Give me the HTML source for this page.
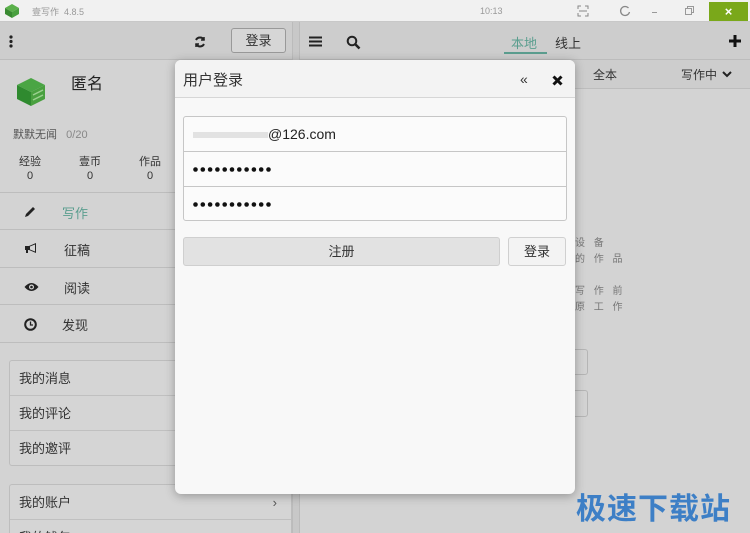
<!DOCTYPE html>
<html><head><meta charset="utf-8"><style>
*{margin:0;padding:0;box-sizing:border-box}
html,body{width:750px;height:533px;overflow:hidden}
body{background:#d3d3d3;font-family:"Liberation Sans","Noto Sans CJK SC",sans-serif;position:relative;color:#333;font-size:13px}
.a{position:absolute;white-space:nowrap}
.row{position:absolute;left:0;width:292px;border-bottom:1px solid #bdbdbd;height:38px}
.card{position:absolute;left:9px;width:283px;border:1px solid #bdbdbd;border-radius:3px;background:#d5d5d5}
.card div{height:35px;line-height:35px;padding-left:9px;border-bottom:1px solid #c0c0c0;font-size:13px}
.card div:last-child{border-bottom:none}
.pw{height:35px;padding-left:9px;padding-top:15px}
.pw svg{display:block}
</style></head><body>
<svg width="0" height="0" style="position:absolute"><defs><g id="dots"><circle cx="2.5" cy="2.5" r="2.3"/><circle cx="9.8" cy="2.5" r="2.3"/><circle cx="17.1" cy="2.5" r="2.3"/><circle cx="24.4" cy="2.5" r="2.3"/><circle cx="31.7" cy="2.5" r="2.3"/><circle cx="39" cy="2.5" r="2.3"/><circle cx="46.3" cy="2.5" r="2.3"/><circle cx="53.6" cy="2.5" r="2.3"/><circle cx="60.9" cy="2.5" r="2.3"/><circle cx="68.2" cy="2.5" r="2.3"/><circle cx="75.5" cy="2.5" r="2.3"/></g></defs></svg>
<div class="a" style="left:0;top:0;width:750px;height:22px;background:#f1f1f1;border-bottom:1px solid #c8c8c8"></div>
<svg class="a" style="left:4px;top:3px" width="16" height="16" viewBox="0 0 16 16"><path d="M8 1L15 5L8 9L1 5Z" fill="#5ab04a"/><path d="M1 5L8 9V15L1 11Z" fill="#3a8a32"/><path d="M15 5L8 9V15L15 11Z" fill="#4aa040"/></svg>
<div class="a" style="left:32px;top:5px;font-size:9px;color:#999">壹写作 &nbsp;4.8.5</div>
<div class="a" style="left:480px;top:6px;font-size:9px;color:#999">10:13</div>
<svg class="a" style="left:577px;top:5px" width="12" height="12" viewBox="0 0 12 12" fill="none" stroke="#888"><path d="M1 4V1H4M8 1H11V4M11 8V11H8M4 11H1V8M2 6H10"/></svg>
<svg class="a" style="left:619px;top:5px" width="12" height="12" viewBox="0 0 12 12" fill="none" stroke="#888" stroke-width="1.3"><path d="M9.5 3A4.5 4.5 0 1 0 10.5 7"/></svg>
<div class="a" style="left:652px;top:12px;width:5px;height:1px;background:#999"></div>
<svg class="a" style="left:685px;top:6px" width="9" height="9" viewBox="0 0 9 9" fill="none" stroke="#999"><path d="M0.5 2.5H6.5V8.5H0.5ZM2.5 2.5V0.5H8.5V6.5H6.5"/></svg>
<div class="a" style="left:709px;top:2px;width:39px;height:19px;background:#7aa81a;color:#fff;text-align:center;font-size:13px;line-height:19px;font-weight:bold">×</div>
<div class="a" style="left:0;top:22px;width:750px;height:38px;background:#cdcdcd;border-bottom:1px solid #bcbcbc"></div>
<div class="a" style="left:292px;top:22px;width:8px;height:511px;background:#c8c8c8;border-left:1px solid #bbb;border-right:1px solid #bbb"></div>
<svg class="a" style="left:9px;top:35px" width="4" height="13"><circle cx="2" cy="2" r="1.6" fill="#222"/><circle cx="2" cy="6.5" r="1.6" fill="#222"/><circle cx="2" cy="11" r="1.6" fill="#222"/></svg>
<svg class="a" style="left:194px;top:36px" width="12" height="12" viewBox="0 0 12 12" fill="none" stroke="#222" stroke-width="2"><path d="M10 4A4.5 4.5 0 0 0 2 4M2 8A4.5 4.5 0 0 0 10 8"/><path d="M10 1V4H7M2 11V8H5" stroke-width="1.5"/></svg>
<div class="a" style="left:231px;top:28px;width:55px;height:25px;border:1px solid #999;border-radius:3px;background:#d6d6d6;text-align:center;line-height:23px;font-size:13px">登录</div>
<svg class="a" style="left:309px;top:36px" width="13" height="11"><path d="M0 1.5H13M0 5.5H13M0 9.5H13" stroke="#222" stroke-width="2"/></svg>
<svg class="a" style="left:346px;top:35px" width="15" height="15" viewBox="0 0 15 15"><circle cx="6" cy="6" r="4.3" stroke="#222" stroke-width="2" fill="none"/><path d="M9.3 9.3L13.5 13.5" stroke="#222" stroke-width="2.5"/></svg>
<div class="a" style="left:511px;top:33px;font-size:13px;color:#5b9e8f">本地</div>
<div class="a" style="left:504px;top:52px;width:43px;height:2px;background:#5b9e8f"></div>
<div class="a" style="left:555px;top:33px;font-size:13px;color:#333">线上</div>
<svg class="a" style="left:729px;top:35px" width="12" height="12"><path d="M6 0V12M0 6H12" stroke="#111" stroke-width="3"/></svg>
<div class="a" style="left:300px;top:60px;width:450px;height:29px;background:#cdcdcd;border-bottom:1px solid #bdbdbd"></div>
<div class="a" style="left:593px;top:66px;font-size:12px">全本</div>
<div class="a" style="left:681px;top:66px;font-size:12px">写作中</div>
<svg class="a" style="left:722px;top:71px" width="10" height="7"><path d="M1 1L5 5L9 1" stroke="#222" stroke-width="2" fill="none"/></svg>
<div class="a" style="left:575px;top:236px;font-size:10px;color:#777;letter-spacing:3px;line-height:16px">设 备<br>的 作 品<br><br>写 作 前<br>原 工 作</div>
<div class="a" style="left:570px;top:349px;width:18px;height:26px;border:1px solid #b5b5b5;border-radius:3px"></div>
<div class="a" style="left:570px;top:390px;width:18px;height:27px;border:1px solid #b5b5b5;border-radius:3px"></div>
<svg class="a" style="left:15px;top:76px" width="32" height="32" viewBox="0 0 32 32"><path d="M16 2L30 9L16 16L2 9Z" fill="#4aa544"/><path d="M2 9L16 16V30L2 23Z" fill="#2f8a2f"/><path d="M30 9L16 16V30L30 23Z" fill="#49a03f"/><path d="M18 19L28 14M18 24L28 19" stroke="#9bd08f" stroke-width="1.5"/></svg>
<div class="a" style="left:71px;top:70px;font-size:16px;color:#222">匿名</div>
<div class="a" style="left:13px;top:126px;font-size:11px;color:#555">默默无闻 &nbsp;&nbsp;<span style="color:#888">0/20</span></div>
<div class="a" style="left:19px;top:155px;font-size:11px;text-align:center;line-height:14px">经验<br>0</div>
<div class="a" style="left:79px;top:155px;font-size:11px;text-align:center;line-height:14px">壹币<br>0</div>
<div class="a" style="left:139px;top:155px;font-size:11px;text-align:center;line-height:14px">作品<br>0</div>
<div class="row" style="top:155px;height:38px"></div>
<div class="row" style="top:193px;height:37px"><svg class="a" style="left:24px;top:13px" width="12" height="12"><path d="M1 11L2 8L9 1L11 3L4 10Z" fill="#222"/></svg><span class="a" style="left:62px;top:10px;font-size:13px;color:#5b9e8f">写作</span></div>
<div class="row" style="top:230px;height:38px"><svg class="a" style="left:24px;top:12px" width="14" height="12"><path d="M1 4H5L12 1V11L5 8H4L4 11H2V8H1Z" fill="#222"/><path d="M6 4.5L11 2.5V9.5L6 7.5Z" fill="#d5d5d5"/></svg><span class="a" style="left:64px;top:10px;font-size:13px">征稿</span></div>
<div class="row" style="top:268px;height:37px"><svg class="a" style="left:24px;top:14px" width="15" height="10"><path d="M0.5 5Q7.5 -3 14.5 5Q7.5 13 0.5 5Z" fill="#222"/><circle cx="7.5" cy="5" r="2.5" fill="#d5d5d5"/><circle cx="7.5" cy="5" r="1.3" fill="#222"/></svg><span class="a" style="left:64px;top:10px;font-size:13px">阅读</span></div>
<div class="row" style="top:305px;height:38px"><svg class="a" style="left:24px;top:13px" width="13" height="13"><circle cx="6.5" cy="6.5" r="5.3" stroke="#222" stroke-width="2" fill="none"/><path d="M6.5 3.5V7H9" stroke="#222" stroke-width="1.3" fill="none"/></svg><span class="a" style="left:62px;top:10px;font-size:13px">发现</span></div>
<div class="card" style="top:360px;height:106px"><div>我的消息</div><div>我的评论</div><div>我的邀评</div></div>
<div class="card" style="top:484px;height:60px"><div>我的账户<span style="float:right;margin-right:14px;color:#555">›</span></div><div>我的钱包</div></div>
<div class="a" style="left:175px;top:60px;width:400px;height:434px;background:#f8f8f8;border-radius:6px;box-shadow:0 2px 10px rgba(0,0,0,.3);overflow:hidden">
 <div style="height:38px;background:#f3f3f3;border-bottom:1px solid #d6d6d6;position:relative">
  <span class="a" style="left:8px;top:9px;font-size:15px;color:#333">用户登录</span>
  <span class="a" style="left:345px;top:11px;font-size:14px;color:#333">«</span>
  <svg class="a" style="left:377px;top:15px" width="11" height="11"><path d="M1.5 1.5L9.5 9.5M9.5 1.5L1.5 9.5" stroke="#111" stroke-width="3"/></svg>
 </div>
 <div class="a" style="left:8px;top:56px;width:384px;height:105px;border:1px solid #c6c6c6;border-radius:3px;background:#fbfbfb">
  <div style="height:35px;border-bottom:1px solid #c6c6c6;padding-left:9px;line-height:34px;font-size:14px;color:#222"><span style="display:inline-block;width:75px;height:6px;background:#e2e2e2;vertical-align:middle"></span>@126.com</div>
  <div class="pw" style="border-bottom:1px solid #c6c6c6"><svg width="80" height="5" fill="#111"><use href="#dots"/></svg></div>
  <div class="pw" style="height:33px"><svg width="80" height="5" fill="#111"><use href="#dots"/></svg></div>
 </div>
 <div class="a" style="left:8px;top:177px;width:317px;height:29px;background:#e2e2e2;border:1px solid #cfcfcf;border-radius:3px;text-align:center;line-height:27px;font-size:13px">注册</div>
 <div class="a" style="left:333px;top:177px;width:58px;height:29px;background:#f3f3f3;border:1px solid #d0d0d0;border-radius:3px;text-align:center;line-height:27px;font-size:13px">登录</div>
</div>
<div class="a" style="left:576px;top:484px;font-size:30px;font-weight:bold;color:#3d7fc6;letter-spacing:1px">极速下载站</div>
</body></html>
